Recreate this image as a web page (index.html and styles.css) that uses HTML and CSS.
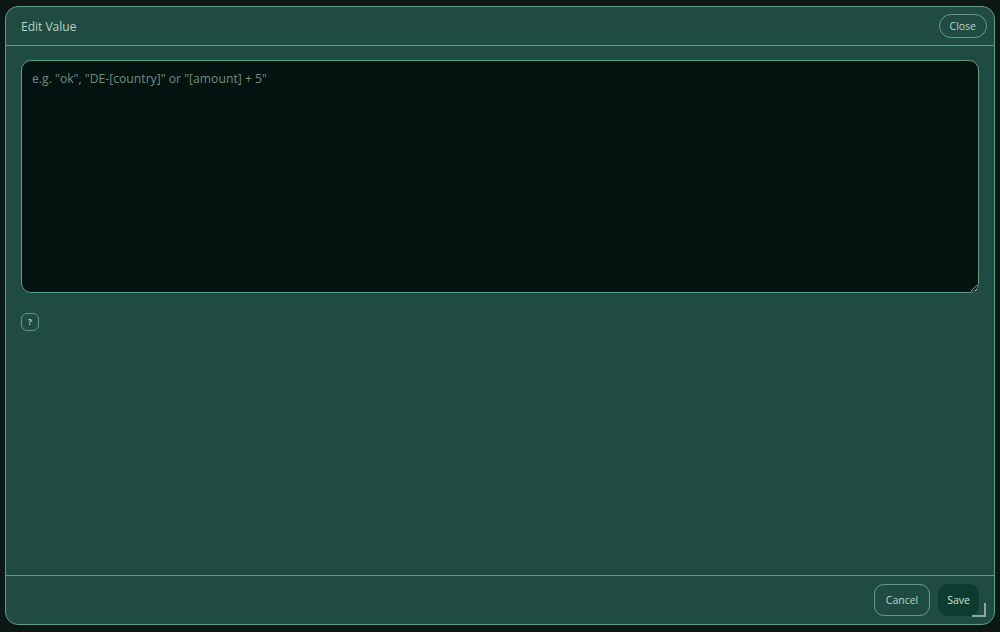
FILE: index.html
```html
<!DOCTYPE html>
<html lang="en">
<head>
    <meta charset="UTF-8">
    <title>Edit Value</title>
    <link rel="stylesheet" href="styles.css">
</head>
<body>

<div class="dialog">
    <div class="dialog-header">
        <span class="dialog-title">Edit Value</span>
        <button class="btn btn-outline btn-close">Close</button>
    </div>

    <div class="dialog-body">
        <textarea class="value-input" placeholder='e.g. "ok", "DE-[country]" or "[amount] + 5"'></textarea>
        <button class="help-btn">?</button>
    </div>

    <div class="dialog-footer">
        <button class="btn btn-outline">Cancel</button>
        <button class="btn btn-save">Save</button>
    </div>

    <span class="resize-handle"></span>
</div>

</body>
</html>
```

FILE: styles.css
```css
:root { --bg: #1f4b40; --line: #5f9c88; --text: #b9d3c9; }
body { margin: 0; background: #0b1814; font-family: "Open Sans", "Noto Sans", sans-serif; font-size: 12px; color: var(--text); }

/* Fenêtre */
.dialog { position: relative; margin: 6px 5px 0 5px; height: 619px; box-sizing: border-box; background: var(--bg); border: 1px solid var(--line); border-radius: 13px; display: flex; flex-direction: column; }

.dialog-header { height: 38px; display: flex; align-items: center; justify-content: space-between; padding: 0 7px 0 15px; border-bottom: 1px solid var(--line); }
.dialog-title { font-size: 12px; margin-top: 1px; }

.dialog-body { flex: 1; padding: 14px 15px; display: flex; flex-direction: column; align-items: flex-start; gap: 20px; }
.value-input { width: 100%; height: 233px; box-sizing: border-box; background: #03130f; border: 1px solid var(--line); border-radius: 10px; padding: 9px 10px; color: var(--text); font-family: inherit; font-size: 12.2px; resize: vertical; outline: none; }
.value-input::placeholder { color: #6f8d82; }

.help-btn { width: 18px; height: 18px; padding: 0; border: 1px solid var(--line); border-radius: 6px; background: transparent; color: var(--text); font-family: inherit; font-size: 8px; font-weight: bold; line-height: 1; }

.dialog-footer { display: flex; justify-content: flex-end; gap: 8px; padding: 8px 15px 8px; border-top: 1px solid var(--line); }

/* Boutons */
.btn { height: 32px; padding: 0 11px; border-radius: 10px; font-family: inherit; font-size: 10.5px; color: var(--text); cursor: pointer; }
.btn-outline { background: transparent; border: 1px solid var(--line); }
.btn-close { height: 24px; padding: 0 10px; border-radius: 12px; }
.btn-save { background: #0c3b2f; border: 1px solid #0c3b2f; color: #cfe2da; padding: 0 8px; }

.resize-handle { position: absolute; right: 8px; bottom: 7px; width: 12px; height: 12px; border-right: 2px solid #8fa6a0; border-bottom: 2px solid #8fa6a0; }
```
